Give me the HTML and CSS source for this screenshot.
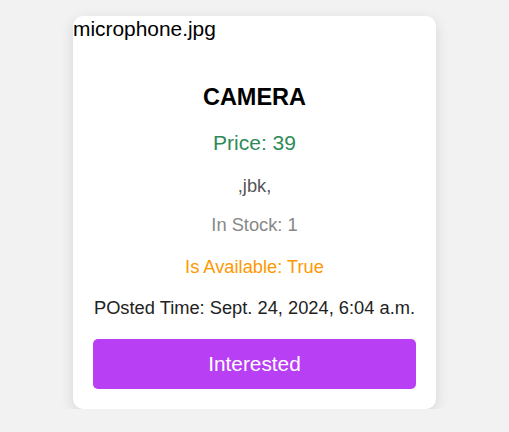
FILE: index.html
```html
<!DOCTYPE html>
<html lang="en">
<head>
<meta charset="utf-8">
<title>Product</title>
<link rel="stylesheet" href="styles.css">
</head>
<body>
  <div class="card">
    <div class="card-image" role="img" aria-label="microphone.jpg">microphone.jpg</div>
    <h2 class="title">CAMERA</h2>
    <p class="price">Price: 39</p>
    <p class="desc">,jbk,</p>
    <p class="stock">In Stock: 1</p>
    <p class="available">Is Available: True</p>
    <p class="posted">POsted Time: Sept. 24, 2024, 6:04 a.m.</p>
    <button class="btn">Interested</button>
  </div>
</body>
</html>
```
FILE: styles.css
```css
html, body {
  margin: 0;
  padding: 0;
}
body {
  background: #f2f2f2;
  font-family: "Liberation Sans", Arial, sans-serif;
  padding-top: 16px;
}
.card {
  width: 363px;
  box-sizing: border-box;
  margin: 0 auto;
  background: #fff;
  border-radius: 10px;
  box-shadow: 0 4px 14px rgba(0, 0, 0, 0.12);
  padding: 0 20px 20px;
  display: flex;
  flex-direction: column;
  text-align: center;
}
.card-image {
  margin: 0 -20px;
  text-align: left;
  font-size: 20.9px;
  line-height: 26px;
  color: #000;
}
.title {
  margin: 41px 0 0;
  font-size: 23.5px;
  line-height: 28px;
  font-weight: bold;
  color: #000;
}
.card p {
  margin: 20px 0 0;
  font-size: 18.3px;
  line-height: 22px;
}
.card .price {
  font-size: 21px;
  line-height: 24px;
  color: #2e8b57;
}
.card .desc {
  color: #555;
}
.card .stock {
  margin-top: 17px;
  color: #888;
}
.card .available {
  color: #ff9800;
}
.card .posted {
  margin-top: 19px;
  color: #222;
  white-space: nowrap;
}
.btn {
  margin-top: 20px;
  height: 50px;
  border: none;
  border-radius: 5px;
  background: #b93ff5;
  color: #fff;
  font-family: inherit;
  font-size: 20.8px;
  padding: 0;
  cursor: pointer;
}
```
